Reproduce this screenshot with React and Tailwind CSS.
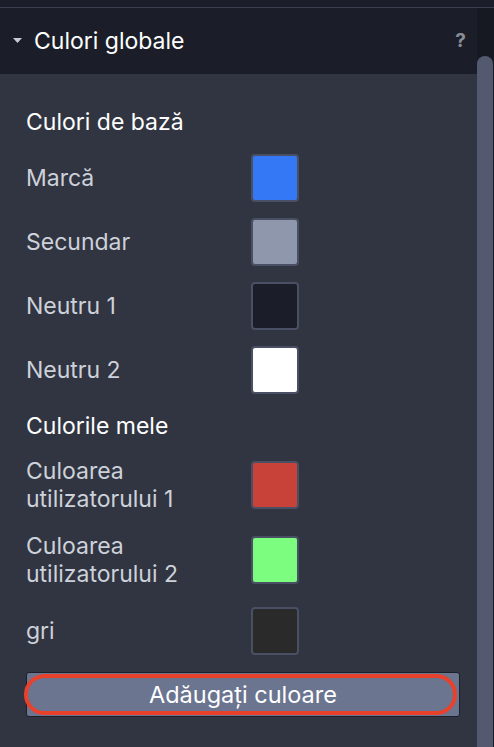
import { useState } from 'react';

const baseColors = [
  { name: 'Marcă', color: '#3478f6' },
  { name: 'Secundar', color: '#8e97ab' },
  { name: 'Neutru 1', color: '#1b1e29' },
  { name: 'Neutru 2', color: '#ffffff' },
];

const myColors = [
  { name: 'Culoarea utilizatorului 1', color: '#c8423a' },
  { name: 'Culoarea utilizatorului 2', color: '#7dfd7f' },
  { name: 'gri', color: '#2a2a2a' },
];

function Swatch({ color }) {
  return (
    <div
      className="w-12 h-12 shrink-0 rounded-[4px] border-2 border-[#4a5063]"
      style={{ backgroundColor: color }}
    />
  );
}

function ColorRow({ name, color }) {
  return (
    <div className="flex items-center min-h-12">
      <span className="w-[225px] text-[23px] leading-[28px] text-[#cdd1da] pr-4">{name}</span>
      <Swatch color={color} />
    </div>
  );
}

export default function App() {
  const [open, setOpen] = useState(true);

  return (
    <div className="w-[494px] h-[747px] overflow-hidden bg-[#1b1e28] flex flex-col font-['Inter','Liberation_Sans',sans-serif]">
      {/* Top strip */}
      <div className="h-[7px] shrink-0 bg-[#1b1e28]" />
      <div className="h-px shrink-0 bg-[#3a3e4e]" />

      <div className="flex flex-1 min-h-0">
        {/* Panel */}
        <div className="w-[477px] flex flex-col">
          <button
            type="button"
            onClick={() => setOpen(!open)}
            className="h-[66px] shrink-0 flex items-center pl-[13px] pr-[11px] bg-[#1b1e28] text-left"
          >
            <svg width="9" height="5" viewBox="0 0 9 5" className="mr-[12px] mt-[-2px]">
              <path d="M0 0 H9 L4.5 5 Z" fill="#c8cbd3" />
            </svg>
            <span className="flex-1 text-[23px] text-white">Culori globale</span>
            <span className="text-[19px] font-bold text-[#8a8d96]">?</span>
          </button>

          {open && (
            <div className="flex-1 bg-[#313541] pl-[26px] pr-[17px] pt-[34px]">
              <h3 className="text-[23px] leading-[28px] text-white">Culori de bază</h3>
              <div className="flex flex-col gap-4 mt-[18px]">
                {baseColors.map((c) => (
                  <ColorRow key={c.name} {...c} />
                ))}
              </div>

              <h3 className="text-[23px] leading-[28px] text-white mt-[18px]">Culorile mele</h3>
              <div className="flex flex-col gap-[19px] mt-[17px]">
                {myColors.map((c) => (
                  <ColorRow key={c.name} {...c} />
                ))}
              </div>

              <div className="relative mt-[17px] w-[434px]">
                <button
                  type="button"
                  className="w-full h-[45px] bg-[#6b7590] border border-[#1d2029] rounded-[3px] text-[23.5px] text-white"
                >
                  Adăugați culoare
                </button>
                <div className="absolute left-[-2px] right-[3px] top-[2px] bottom-[2px] rounded-full border-4 border-[#e8412c] pointer-events-none" />
              </div>
            </div>
          )}
        </div>

        {/* Scrollbar */}
        <div className="w-[17px] flex flex-col bg-[#171922] pr-[1px]">
          <div className="mt-[48px] flex-1 rounded-t-full bg-[#535a70]" />
        </div>
      </div>
    </div>
  );
}
